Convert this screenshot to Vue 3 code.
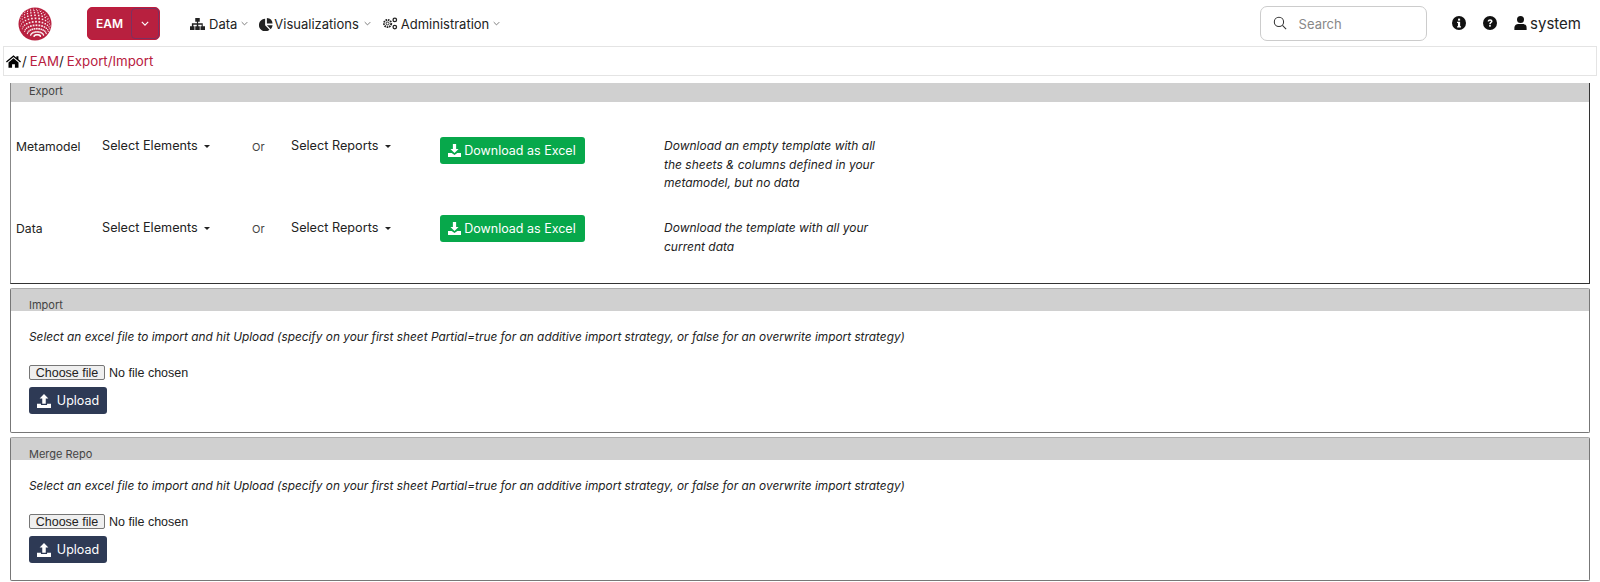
<script setup>
const globeDots = [];
for (let lat = -78; lat <= 78; lat += 13) {
  for (let lon = -84; lon <= 84; lon += 14) {
    const la = (lat * Math.PI) / 180;
    const lo = (lon * Math.PI) / 180;
    const x = Math.cos(la) * Math.sin(lo);
    const y = Math.sin(la);
    const z = Math.cos(la) * Math.cos(lo);
    const ry = y * Math.cos(0.6) - z * Math.sin(0.6);
    const rx = x * Math.cos(0.15) + y * Math.sin(0.15);
    const rz = y * Math.sin(0.6) + z * Math.cos(0.6);
    if (rz > 0.1) {
      globeDots.push({ cx: 17 + rx * 15.5, cy: 17 + ry * 15.5, s: 0.5 + rz * 1.3 });
    }
  }
}
const exportRows = [
  { name: 'Metamodel', note: 'Download an empty template with all the sheets & columns defined in your metamodel, but no data' },
  { name: 'Data', note: 'Download the template with all your current data' },
];
const uploadPanels = ['Import', 'Merge Repo'];
const note = 'Select an excel file to import and hit Upload (specify on your first sheet Partial=true for an additive import strategy, or false for an overwrite import strategy)';
</script>

<template>
  <div class="page">
    <header class="navbar">
      <svg class="logo" viewBox="0 0 34 34" width="34" height="34">
        <circle cx="17" cy="17" r="16.5" fill="#b8203f" />
        <rect v-for="(d, i) in globeDots" :key="i" :x="d.cx - d.s / 2" :y="d.cy - d.s / 2" :width="d.s" :height="d.s" fill="#fff" opacity="0.9" />
      </svg>
      <div class="app-switch">
        <span class="app-name">EAM</span>
        <span class="app-caret">
          <svg viewBox="0 0 10 6" width="8" height="5"><path d="M1 1l4 4 4-4" fill="none" stroke="#fff" stroke-width="1.4" /></svg>
        </span>
      </div>
      <nav class="menu">
        <span class="menu-item">
          <svg viewBox="0 0 20 16" width="15" height="12"><path d="M7 0h6v5h-2.200v2H17v4h3v5h-6v-5h1.500V9h-4.500v2H13v5H7v-5h2V9H4.500v2H6v5H0v-5h2.500V7H9.200V5H7z" fill="#222" /></svg>
          Data
          <svg viewBox="0 0 10 6" width="7" height="5"><path d="M1 1l4 4 4-4" fill="none" stroke="#666" stroke-width="1.200" /></svg>
        </span>
        <span class="menu-item viz">
          <svg viewBox="0 0 16 16" width="14" height="14"><path d="M7 2v7.500l5 5A7.200 7.200 0 1 1 7 2z" fill="#222" /><path d="M9 1a7 7 0 0 1 6.500 6.500H9z" fill="#222" /><path d="M9 9.500h6.500a7 7 0 0 1-2 4.500z" fill="#222" /></svg>
          Visualizations
          <svg viewBox="0 0 10 6" width="7" height="5"><path d="M1 1l4 4 4-4" fill="none" stroke="#666" stroke-width="1.200" /></svg>
        </span>
        <span class="menu-item admin">
          <svg viewBox="0 0 20 16" width="16" height="13"><circle cx="7" cy="8" r="4.500" fill="none" stroke="#222" stroke-width="2.400" stroke-dasharray="2 1" /><circle cx="7" cy="8" r="1.800" fill="none" stroke="#222" stroke-width="1.200" /><circle cx="16" cy="3.500" r="2.200" fill="none" stroke="#222" stroke-width="1.600" /><circle cx="16" cy="12.500" r="2.200" fill="none" stroke="#222" stroke-width="1.600" /></svg>
          Administration
          <svg viewBox="0 0 10 6" width="7" height="5"><path d="M1 1l4 4 4-4" fill="none" stroke="#666" stroke-width="1.200" /></svg>
        </span>
      </nav>
      <div class="search">
        <svg viewBox="0 0 16 16" width="14" height="14"><circle cx="6.800" cy="6.800" r="5.300" fill="none" stroke="#333" stroke-width="1.200" /><path d="M10.800 10.800L15 15" stroke="#333" stroke-width="1.200" /></svg>
        <span class="search-text">Search</span>
      </div>
      <div class="tools">
        <svg viewBox="0 0 16 16" width="14" height="14"><circle cx="8" cy="8" r="8" fill="#111" /><rect x="6.900" y="3" width="2.400" height="2.300" fill="#fff" /><path d="M5.800 6.600h3.500v5h1v1.500H5.800v-1.500h1v-3.500h-1z" fill="#fff" /></svg>
        <svg viewBox="0 0 16 16" width="14" height="14"><circle cx="8" cy="8" r="8" fill="#111" /><path d="M5.300 6.200C5.500 4.600 6.600 3.800 8.100 3.800c1.600 0 2.800 1 2.800 2.300 0 1.900-2.100 1.900-2.100 3.300H7.100c0-2.300 2-2.300 2-3.300 0-.5-.4-.8-1-.8s-1 .4-1.100 1z" fill="#fff" /><rect x="7" y="10.300" width="1.900" height="1.900" fill="#fff" /></svg>
        <span class="user">
          <svg viewBox="0 0 14 16" width="13" height="14"><circle cx="7" cy="4" r="4" fill="#111" /><path d="M0 16v-2.500C0 10.500 2 9 4.500 9h5c2.500 0 4.500 1.500 4.500 4.500V16z" fill="#111" /></svg>
          system
        </span>
      </div>
    </header>

    <div class="crumbs">
      <svg viewBox="0 0 18 15" width="15" height="13"><path d="M9 0l3.500 2.900V1.200h2.400v3.700L18 7.500l-1 1.200L9 2.100 1 8.700 0 7.500z" fill="#000" /><path d="M9 3.600l6 5V15h-4.300v-4.300H7.300V15H3V8.600z" fill="#000" /></svg>
      <span class="sep">/</span>
      <a>EAM</a>
      <span class="sep">/</span>
      <a>Export/Import</a>
    </div>

    <section class="panel export">
      <div class="panel-head short">Export</div>
      <div class="rows">
        <div v-for="r in exportRows" :key="r.name" class="row">
          <div class="row-name">{{ r.name }}</div>
          <div class="drop">Select Elements <i class="caret"></i></div>
          <div class="or">Or</div>
          <div class="drop">Select Reports <i class="caret"></i></div>
          <div class="btn-cell">
            <button class="btn green">
              <svg viewBox="0 0 16 16" width="13" height="13"><path d="M6 0h4v6h3L8 11.200 3 6h3z" fill="#fff" /><path d="M0 11h4.500L8 13.500 11.500 11H16v5H0z" fill="#fff" /></svg>
              Download as Excel
            </button>
          </div>
          <p class="row-note">{{ r.note }}</p>
        </div>
      </div>
    </section>

    <section v-for="title in uploadPanels" :key="title" class="panel upload">
      <div class="panel-head tallhead">{{ title }}</div>
      <div class="upload-body">
        <p class="upload-note">{{ note }}</p>
        <div class="file">
          <button class="file-btn">Choose file</button>
          <span>No file chosen</span>
        </div>
        <button class="btn navy">
          <svg viewBox="0 0 16 16" width="14" height="14"><path d="M8 0l5 5.200h-3V11H6V5.200H3z" fill="#fff" /><path d="M0 11h4.500v1.500h7V11H16v5H0z" fill="#fff" /></svg>
          Upload
        </button>
      </div>
    </section>
  </div>
</template>

<style scoped>
.page {
  width: 1600px;
  height: 582px;
  overflow: hidden;
  background: #fff;
  font-family: Inter, "Open Sans", sans-serif;
  color: #222;
  font-size: 13px;
}
.navbar {
  height: 46px;
  display: flex;
  align-items: center;
  padding-left: 18px;
  box-sizing: border-box;
}
.logo { flex: none; margin-top: 2px; }
.app-switch {
  display: flex;
  margin-left: 35px;
  width: 73px;
  height: 33px;
  background: #b8203f;
  border: 1px solid #c01a3c;
  border-radius: 5px;
  box-sizing: border-box;
  color: #fff;
  font-weight: 600;
  font-size: 12px;
}
.app-name { width: 43px; display: flex; align-items: center; justify-content: center; }
.app-caret {
  flex: 1;
  display: flex;
  align-items: center;
  justify-content: center;
  border: 1px solid #7c3160;
  border-radius: 4px;
}
.menu { display: flex; margin-left: 30px; gap: 11px; padding-top: 1px; }
.menu-item { display: flex; align-items: center; gap: 4px; font-size: 13px; white-space: nowrap; }
.viz { gap: 1px; }
.viz svg:last-child { margin-left: 4px; }
.admin { gap: 3px; }
.admin svg:last-child { margin-left: 1px; }
.search {
  margin-left: auto;
  width: 167px;
  height: 35px;
  box-sizing: border-box;
  border: 1px solid #ccc;
  border-radius: 7px;
  display: flex;
  align-items: center;
  gap: 12px;
  padding-left: 12px;
  color: #888;
  font-size: 13px;
}
.search-text { padding-top: 1px; }
.tools { display: flex; align-items: center; margin-left: 25px; margin-right: 19px; gap: 17.250px; }
.user { display: flex; align-items: center; gap: 3px; font-size: 15px; color: #222; }
.crumbs {
  height: 30px;
  margin: 0 3px;
  box-sizing: border-box;
  border: 1px solid #e4e4e4;
  display: flex;
  align-items: center;
  padding-left: 2px;
  font-size: 13.300px;
}
.crumbs a { color: #b8203f; margin-left: 3px; }
.sep { color: #222; margin-left: 1px; }
.crumbs a + .sep { margin-left: 0; }
.panel {
  margin: 0 10px;
  border: 1px solid #333;
  border-top: none;
  box-sizing: border-box;
}
.panel-head {
  background: #d0d0d0;
  padding-left: 18px;
  font-size: 11px;
  color: #444;
}
.short { height: 19px; line-height: 16px; }
.tallhead { height: 22px; line-height: 32px; overflow: hidden; }
.export { margin-top: 7px; height: 201px; border-left-color: #888; }
.rows { padding-top: 30px; }
.row {
  display: grid;
  grid-template-columns: 86px 150px 39px 148.500px 224.500px 222px;
  height: 82px;
  padding-left: 5px;
}
.row-name { font-size: 12.200px; line-height: 18px; padding-top: 6px; color: #222; }
.drop { font-size: 12.700px; line-height: 18px; padding-top: 5px; color: #222; }
.or { font-size: 11px; line-height: 18px; padding-top: 6px; color: #444; }
.caret {
  display: inline-block;
  margin-left: 3px;
  vertical-align: 2px;
  border-top: 3px solid #222;
  border-left: 3px solid transparent;
  border-right: 3px solid transparent;
}
.btn {
  display: inline-flex;
  align-items: center;
  gap: 3px;
  border: none;
  border-radius: 3px;
  color: #fff;
  font-family: inherit;
  font-size: 12.500px;
  height: 27px;
  box-sizing: border-box;
  padding: 0;
}
.green { background: #07a84b; width: 145px; justify-content: center; }
.btn-cell { padding-top: 1px; }
.row:first-child .btn-cell { padding-top: 5px; }
.row-note {
  margin: 5px 0 0;
  font-size: 12px;
  line-height: 18.500px;
  font-style: italic;
  color: #222;
}
.upload { margin-top: 4px; height: 145px; border-top: 1px solid #aaa; border-radius: 2px; border-color: #777; border-top-color: #aaa; }
.upload:last-child { height: 144px; }
.upload-body { padding: 17px 18px 0; }
.upload-note { margin: 0 0 19px; font-size: 11.850px; line-height: 18px; font-style: italic; color: #222; white-space: nowrap; }
.file {
  display: flex;
  align-items: center;
  gap: 4px;
  font-family: "Liberation Sans", Arial, sans-serif;
  font-size: 12.500px;
  color: #222;
  height: 15px;
}
.file-btn {
  width: 76px;
  height: 15px;
  box-sizing: border-box;
  padding: 0;
  background: #efefef;
  border: 1px solid #767676;
  border-radius: 2px;
  font: inherit;
  line-height: 12px;
  color: #222;
}
.navy { background: #2e3a55; width: 78px; justify-content: center; gap: 6px; margin-top: 7px; }
</style>
